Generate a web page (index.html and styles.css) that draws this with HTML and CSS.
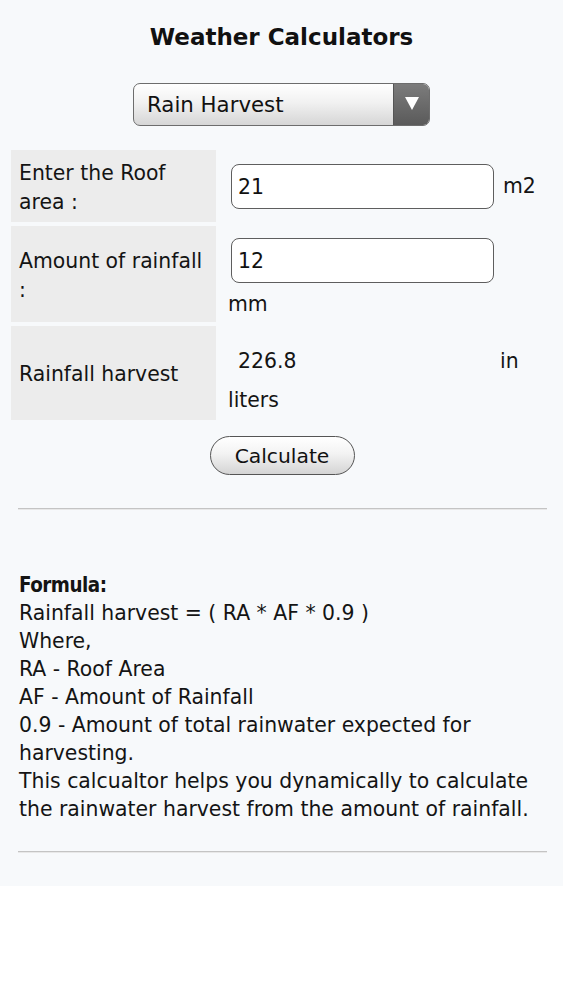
FILE: index.html
```html
<!DOCTYPE html>
<html lang="en">
<head>
<meta charset="utf-8">
<title>Weather Calculators</title>
<link rel="stylesheet" href="styles.css">
</head>
<body>
<div class="page">
  <h1 class="title">Weather Calculators</h1>
  <div class="select">
    <span class="select-text">Rain Harvest</span>
    <span class="select-arrow"><span class="tri"></span></span>
  </div>
  <div class="form">
    <div class="label">Enter the Roof area :</div>
    <div class="field field-row">
      <div class="input">21</div>
      <span class="unit">m2</span>
    </div>
    <div class="label">Amount of rainfall :</div>
    <div class="field field-col">
      <div class="input">12</div>
      <span class="unit-below">mm</span>
    </div>
    <div class="label">Rainfall harvest</div>
    <div class="field field-col">
      <div class="result-line">
        <div class="output">226.8</div>
        <span class="unit">in</span>
      </div>
      <span class="unit-below liters">liters</span>
    </div>
  </div>
  <div class="actions">
    <button class="btn" type="button">Calculate</button>
  </div>
  <hr class="rule rule-top">
  <div class="formula">
    <div class="formula-head">Formula:</div>
    <div>Rainfall harvest = ( RA * AF * 0.9 )</div>
    <div>Where,</div>
    <div>RA - Roof Area</div>
    <div>AF - Amount of Rainfall</div>
    <div>0.9 - Amount of total rainwater expected for harvesting.</div>
    <div>This calcualtor helps you dynamically to calculate the rainwater harvest from the amount of rainfall.</div>
  </div>
  <hr class="rule rule-bottom">
</div>
</body>
</html>
```

FILE: styles.css
```css
html, body {
  margin: 0;
  padding: 0;
  background: #ffffff;
}
body {
  font-family: "DejaVu Sans", "Liberation Sans", sans-serif;
  color: #141414;
  font-size: 20.4px;
  line-height: 28px;
}
.page {
  background: #f7f9fb;
  padding-bottom: 33px;
  overflow: hidden;
}
.title {
  margin: 23px 0 0;
  font-size: 23px;
  line-height: 28px;
  font-weight: bold;
  text-align: center;
  color: #111;
}
.select {
  margin: 32px auto 0;
  width: 297px;
  height: 43px;
  box-sizing: border-box;
  border: 1.5px solid #6d6d6d;
  border-radius: 7px;
  background: linear-gradient(#ffffff 0%, #f1f1f1 45%, #d6d6d6 100%);
  display: flex;
  align-items: stretch;
  overflow: hidden;
}
.select-text {
  flex: 1;
  padding-left: 13px;
  font-size: 21.3px;
  line-height: 42px;
  color: #111;
}
.select-arrow {
  width: 35px;
  background: linear-gradient(#7c7c7c, #5a5a5a);
  border-left: 1px solid #555;
  display: flex;
  align-items: center;
  justify-content: center;
}
.tri {
  width: 0;
  height: 0;
  border-left: 7px solid transparent;
  border-right: 7px solid transparent;
  border-top: 13px solid #ffffff;
  margin-top: -2px;
}
.form {
  margin: 24px 8px 0 11px;
  display: grid;
  grid-template-columns: 205px 1fr;
  grid-template-rows: 72px 96px 94px;
  column-gap: 4px;
  row-gap: 4px;
}
.label {
  background: #ececec;
  padding: 3px 8px 0;
  display: flex;
  align-items: center;
  line-height: 29px;
}
.field {
  padding-left: 8px;
}
.field-row {
  display: flex;
  align-items: center;
}
.field-col {
  display: flex;
  flex-direction: column;
  align-items: flex-start;
  padding-top: 12px;
}
.input {
  margin-left: 3px;
  width: 263px;
  height: 45px;
  box-sizing: border-box;
  background: #ffffff;
  border: 1.5px solid #5e5e5e;
  border-radius: 8px;
  padding-left: 6px;
  line-height: 44px;
  color: #111;
}
.unit {
  margin-left: 9px;
}
.unit-below {
  margin-top: 7px;
}
.result-line {
  display: flex;
  align-items: center;
}
.output {
  margin-left: 3px;
  width: 263px;
  height: 45px;
  box-sizing: border-box;
  padding-left: 7px;
  line-height: 46px;
}
.result-line .unit {
  margin-left: 6px;
}
.liters {
  margin-top: 2px;
  line-height: 30px;
}
.actions {
  margin-top: 16px;
  display: flex;
  justify-content: center;
  padding-left: 1px;
}
.btn {
  width: 145px;
  height: 39px;
  box-sizing: border-box;
  border: 1.5px solid #555;
  border-radius: 20px;
  background: linear-gradient(#ffffff 0%, #f3f3f3 45%, #d4d4d4 100%);
  font-family: "DejaVu Sans", "Liberation Sans", sans-serif;
  font-size: 20.3px;
  color: #111;
  padding: 0;
  line-height: 34px;
}
.rule {
  margin: 0 16px 0 18px;
  height: 0;
  border: 0;
  border-top: 1px solid #c4c4c4;
  border-bottom: 1px solid #e8e8e8;
}
.rule-top {
  margin-top: 33px;
}
.formula {
  margin: 61px 16px 0 19px;
}
.formula-head {
  font-family: "DejaVu Sans Condensed", "DejaVu Sans", sans-serif;
  font-weight: bold;
  letter-spacing: -0.5px;
}
.rule-bottom {
  margin-top: 28px;
}
```
